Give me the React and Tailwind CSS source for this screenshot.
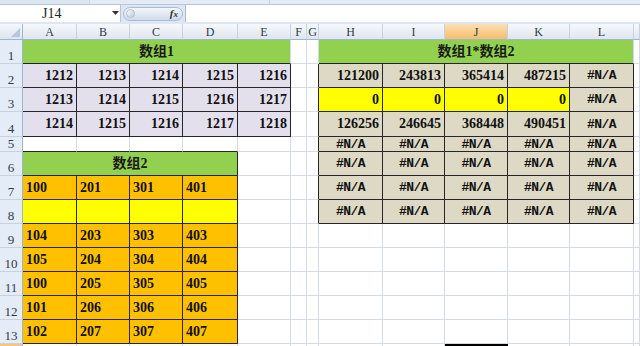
import clsx from 'clsx';

const T1 = [
    [1212, 1213, 1214, 1215, 1216],
    [1213, 1214, 1215, 1216, 1217],
    [1214, 1215, 1216, 1217, 1218],
];
const P = [
    [121200, 243813, 365414, 487215],
    [0, 0, 0, 0],
    [126256, 246645, 368448, 490451],
];
const T2 = [
    [100, 201, 301, 401],
    null,
    [104, 203, 303, 403],
    [105, 204, 304, 404],
    [100, 205, 305, 405],
    [101, 206, 306, 406],
    [102, 207, 307, 407],
];
const LETTERS = ['A', 'B', 'C', 'D', 'E', 'F', 'G', 'H', 'I', 'J', 'K', 'L', ''];

const fonts = {
    num: "font-['Liberation_Serif'] font-bold text-[14px] text-[#111]",
    na: "font-['Liberation_Mono'] font-bold text-[13px] tracking-[-0.6px] text-[#111]",
    title: "font-['Liberation_Serif','Noto_Sans_CJK_SC',serif] font-bold text-[14px] text-[#1a1a1a]",
};

const Cell = ({ span, bg = 'bg-white', dr, db, align, kind = 'num', children }) => (
    <div
        className={clsx(
            'flex items-center border-r border-b overflow-hidden whitespace-nowrap leading-none',
            span === 5 && 'col-span-5',
            span === 4 && 'col-span-4',
            bg,
            dr ? 'border-r-[#262626]' : 'border-r-[#d4dbe6]',
            db ? 'border-b-[#262626]' : 'border-b-[#d4dbe6]',
            align === 'right' && 'justify-end pr-[3px]',
            align === 'left' && 'justify-start pl-[3px]',
            !align && 'justify-center',
            fonts[kind]
        )}
    >
        {children}
    </div>
);

const RowHead = ({ n, active }) => (
    <div
        className={clsx(
            "flex items-end justify-center pb-[1px] border-r border-b border-r-[#9eb6ce] border-b-[#c5d2e1] font-['Liberation_Serif'] text-[13px] leading-none text-[#2f3b4c]",
            active ? 'bg-[#f6c57e]' : 'bg-[#e4ecf7]'
        )}
    >
        {n}
    </div>
);

// blank cells for F, G (G carries the right table's left edge when asked)
const Gap = ({ edge }) => (
    <>
        <Cell />
        <Cell dr={edge} />
    </>
);

const App = () => {
    const rows = [];

    // row 1
    rows.push(
        <RowHead key="h1" n={1} />,
        <Cell key="t1" span={5} bg="bg-[#92d050]" db kind="title">数组1</Cell>,
        <Gap key="g1" />,
        <Cell key="t3" span={5} bg="bg-[#92d050]" db kind="title">数组1*数组2</Cell>,
        <Cell key="x1" />
    );

    // rows 2-4
    T1.forEach((r, i) => {
        rows.push(<RowHead key={`h${i + 2}`} n={i + 2} />);
        r.forEach((v, j) => rows.push(
            <Cell key={`a${i}${j}`} bg="bg-[#e4dfec]" dr db align="right">{v}</Cell>
        ));
        rows.push(<Gap key={`g${i + 2}`} edge />);
        P[i].forEach((v, j) => rows.push(
            <Cell key={`p${i}${j}`} bg={i === 1 ? 'bg-[#ffff00]' : 'bg-[#ddd9c4]'} dr db align="right">{v}</Cell>
        ));
        rows.push(
            <Cell key={`n${i}`} bg="bg-[#ddd9c4]" dr db kind="na">#N/A</Cell>,
            <Cell key={`x${i + 2}`} />
        );
    });

    // row 5
    rows.push(<RowHead key="h5" n={5} />);
    [0, 1, 2, 3].forEach((j) => rows.push(<Cell key={`b5${j}`} db />));
    rows.push(<Cell key="e5" />, <Gap key="g5" edge />);
    [0, 1, 2, 3, 4].forEach((j) => rows.push(
        <Cell key={`n5${j}`} bg="bg-[#ddd9c4]" dr db kind="na">#N/A</Cell>
    ));
    rows.push(<Cell key="x5" />);

    // row 6
    rows.push(
        <RowHead key="h6" n={6} />,
        <Cell key="t2" span={4} bg="bg-[#92d050]" dr db kind="title">数组2</Cell>,
        <Cell key="e6" />,
        <Gap key="g6" edge />
    );
    [0, 1, 2, 3, 4].forEach((j) => rows.push(
        <Cell key={`n6${j}`} bg="bg-[#ddd9c4]" dr db kind="na">#N/A</Cell>
    ));
    rows.push(<Cell key="x6" />);

    // rows 7-13
    T2.forEach((r, i) => {
        const n = i + 7;
        const right = n <= 8;
        rows.push(<RowHead key={`h${n}`} n={n} />);
        [0, 1, 2, 3].forEach((j) => rows.push(
            <Cell key={`c${n}${j}`} bg={r ? 'bg-[#ffc000]' : 'bg-[#ffff00]'} dr db align="left">
                {r ? r[j] : ''}
            </Cell>
        ));
        rows.push(<Cell key={`e${n}`} />, <Gap key={`g${n}`} edge={right} />);
        [0, 1, 2, 3, 4].forEach((j) => rows.push(
            right
                ? <Cell key={`r${n}${j}`} bg="bg-[#ddd9c4]" dr db kind="na">#N/A</Cell>
                : <Cell key={`r${n}${j}`} />
        ));
        rows.push(<Cell key={`x${n}`} />);
    });

    // row 14 (only its top edge shows), J14 selected
    rows.push(<RowHead key="h14" active />);
    LETTERS.forEach((l, j) => rows.push(
        l === 'J'
            ? <div key="sel" className="border-2 border-black bg-white" />
            : <Cell key={`z${j}`} />
    ));

    return (
        <div className="w-[640px] h-[346px] overflow-hidden bg-white select-none">
            {/* ribbon edge */}
            <div className="h-[5px] bg-[#dbe5f1] border-b border-[#b8c8dc] flex">
                <div className="w-[90px] border-r border-[#c9d6e6]" />
                <div className="w-[180px] border-r border-[#c9d6e6] bg-[#e3ebf5]" />
                <div className="flex-1 bg-[#e3ebf5]" />
            </div>

            {/* formula bar */}
            <div className="h-[17px] flex bg-[#dde6f2]">
                <div className="w-[121px] bg-white border-r border-[#b5c5d8] flex items-center relative">
                    <span className="ml-[42px] font-['Liberation_Serif'] text-[14px] leading-none text-[#222]">J14</span>
                    <svg className="absolute left-[112px] top-[6px]" width="7" height="4" viewBox="0 0 7 4">
                        <path d="M0 0h7L3.5 4z" fill="#333" />
                    </svg>
                </div>
                <div className="w-[64px] flex items-center pl-[2px] pr-[2px]">
                    <div className="h-[14px] flex-1 rounded-full bg-gradient-to-b from-[#f4f7fb] to-[#cfdbea] border border-[#a9bcd3] flex items-center justify-between pl-[2px] pr-[4px]">
                        <div className="w-[9px] h-[9px] rounded-full bg-gradient-to-br from-white to-[#b9c9dc] border border-[#b0c0d4]" />
                        <span className="font-['Liberation_Serif'] italic font-bold text-[11px] leading-none text-[#333]">f<span className="text-[9px]">x</span></span>
                    </div>
                </div>
                <div className="flex-1 bg-white border-l border-[#a9bcd3]" />
            </div>
            <div className="h-[2px] bg-[#dde6f2]" />

            {/* sheet */}
            <div className="grid grid-cols-[23px_54px_53px_53px_55px_53px_16px_12px_64px_62px_63px_62px_64px_6px] grid-rows-[16px_24px_24px_24px_25px_15px_24px_24px_24px_24px_24px_24px_24px_24px_24px]">
                {/* corner */}
                <div className="relative bg-gradient-to-b from-[#f4f7fb] to-[#dce5ef] border-r border-b border-[#9eb6ce]">
                    <div className="absolute right-[2px] bottom-[2px] w-0 h-0 border-l-[9px] border-l-transparent border-b-[9px] border-b-[#b7c7da]" />
                </div>
                {LETTERS.map((l, j) => (
                    <div
                        key={`col${j}`}
                        className={clsx(
                            "flex items-center justify-center border-r border-b border-r-[#c5d2e1] border-b-[#9eb6ce] font-['Liberation_Serif'] text-[12px] leading-none text-[#2f3b4c]",
                            l === 'J'
                                ? 'bg-gradient-to-b from-[#fbe0b2] to-[#f5bd6c]'
                                : 'bg-gradient-to-b from-[#f6f8fb] to-[#dfe6ef]'
                        )}
                    >
                        {l}
                    </div>
                ))}
                {rows}
            </div>
        </div>
    );
};

export default App;
